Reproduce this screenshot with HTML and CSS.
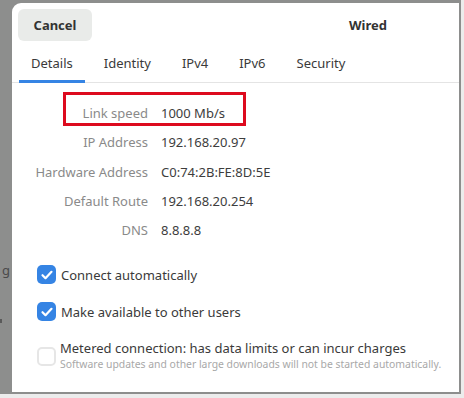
FILE: index.html
```html
<!DOCTYPE html>
<html>
<head>
<meta charset="utf-8">
<link rel="stylesheet" href="styles.css">
</head>
<body>
<div class="backdrop">
  <div class="behind">
    <span class="frag frag-g">g</span>
    <span class="frag-dot"></span>
  </div>
  <div class="dialog">
    <div class="header">
      <button class="cancel">Cancel</button>
      <div class="title">Wired</div>
    </div>
    <div class="tabs">
      <div class="tab active">Details</div>
      <div class="tab">Identity</div>
      <div class="tab">IPv4</div>
      <div class="tab">IPv6</div>
      <div class="tab">Security</div>
    </div>
    <div class="details">
      <div class="highlight"></div>
      <div class="label">Link speed</div><div class="value">1000 Mb/s</div>
      <div class="label">IP Address</div><div class="value">192.168.20.97</div>
      <div class="label">Hardware Address</div><div class="value">C0:74:2B:FE:8D:5E</div>
      <div class="label">Default Route</div><div class="value">192.168.20.254</div>
      <div class="label">DNS</div><div class="value">8.8.8.8</div>
    </div>
    <div class="options">
      <div class="option">
        <span class="check on"><svg viewBox="0 0 18 18" width="18" height="18"><path d="M4.5 9.2l3 3 6-6.4" fill="none" stroke="#fff" stroke-width="2.2" stroke-linecap="round" stroke-linejoin="round"/></svg></span>
        <span class="opt-text">Connect automatically</span>
      </div>
      <div class="option">
        <span class="check on"><svg viewBox="0 0 18 18" width="18" height="18"><path d="M4.5 9.2l3 3 6-6.4" fill="none" stroke="#fff" stroke-width="2.2" stroke-linecap="round" stroke-linejoin="round"/></svg></span>
        <span class="opt-text">Make available to other users</span>
      </div>
      <div class="option metered">
        <span class="check off"></span>
        <div class="opt-stack">
          <span class="opt-text">Metered connection: has data limits or can incur charges</span>
          <span class="opt-sub">Software updates and other large downloads will not be started automatically.</span>
        </div>
      </div>
    </div>
  </div>
</div>
</body>
</html>
```

FILE: styles.css
```css
html, body {
  margin: 0;
  padding: 0;
}
body {
  width: 464px;
  height: 398px;
  background: #ececec;
  font-family: "Noto Sans", "Open Sans", sans-serif;
  overflow: hidden;
}
.backdrop {
  width: 461px;
  height: 394px;
  background: #8d8e8d;
  display: flex;
  box-sizing: border-box;
  padding: 3px 2px 2px 0;
}
.behind {
  width: 12px;
  flex: none;
  position: relative;
  overflow: hidden;
  color: #4a4a4a;
  font-size: 13px;
}
.frag {
  position: absolute;
  left: 2px;
}
.frag-g { top: 258px; }
.frag-dot {
  position: absolute;
  left: 0;
  top: 316px;
  width: 2px;
  height: 4px;
  background: #5a5a5a;
}
.dialog {
  flex: 1;
  background: #ffffff;
  border-top-left-radius: 9px;
  display: flex;
  flex-direction: column;
  color: #333333;
}
.header {
  display: flex;
  align-items: flex-start;
  height: 45px;
  padding: 6px 0 0 6px;
  box-sizing: border-box;
}
.cancel {
  width: 74px;
  height: 32px;
  border: none;
  border-radius: 6px;
  background: #e9ebe9;
  font-family: inherit;
  font-size: 13px;
  font-weight: 700;
  color: #333;
  padding: 0;
}
.title {
  margin-left: 257px;
  line-height: 32px;
  font-size: 13px;
  font-weight: 700;
  color: #333;
}
.tabs {
  display: flex;
  gap: 7px;
  padding-left: 7px;
  border-bottom: 1px solid #e4e4e4;
  height: 35px;
  box-sizing: border-box;
}
.tab {
  padding: 0 12px;
  font-size: 13px;
  color: #3a3a3a;
  display: flex;
  align-items: center;
  padding-bottom: 2px;
  border-bottom: 3px solid transparent;
  margin-bottom: -1px;
}
.tab.active {
  border-bottom-color: #3584e4;
}
.details {
  position: relative;
  display: grid;
  grid-template-columns: 136px auto;
  column-gap: 13px;
  grid-auto-rows: 29.3px;
  align-items: center;
  padding-top: 15.5px;
  font-size: 13px;
}
.label {
  text-align: right;
  color: #8a8a8a;
}
.value {
  color: #3d3d3d;
}
.highlight {
  position: absolute;
  left: 51px;
  top: 9px;
  width: 177px;
  height: 28px;
  border: 3px solid #dd0a1e;
}
.options {
  display: flex;
  flex-direction: column;
  padding: 11.5px 0 0 25px;
}
.option {
  display: flex;
  align-items: center;
  gap: 5px;
  height: 37px;
  font-size: 13px;
}
.check {
  width: 19px;
  height: 19px;
  border-radius: 5px;
  box-sizing: border-box;
  flex: none;
  display: flex;
  align-items: center;
  justify-content: center;
}
.check.on {
  background: #3584e4;
}
.check.off {
  border: 2px solid #e6e6e6;
}
.opt-text {
  color: #3a3a3a;
}
.metered {
  margin-top: 8px;
  height: 36px;
  align-items: center;
  gap: 4px;
}
.opt-stack {
  display: flex;
  flex-direction: column;
  line-height: 16px;
}
.opt-sub {
  font-size: 10.4px;
  color: #a8a8a8;
}
```
